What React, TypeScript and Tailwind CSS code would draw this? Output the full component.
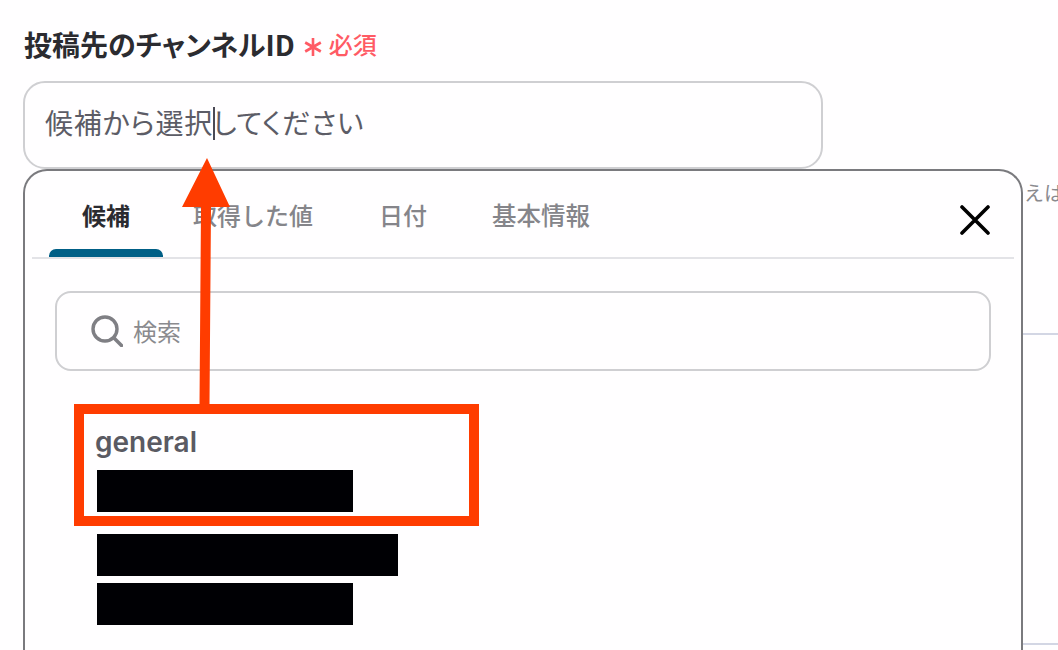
import React from "react";

const cjk = "font-['Noto_Sans_CJK_JP','Noto_Sans',sans-serif]";
const palt = "[font-feature-settings:'palt']";

const tabs = ["候補", "取得した値", "日付", "基本情報"];

const App = () => {
  return (
    <div className={`relative w-[1058px] h-[650px] overflow-hidden bg-[#fffeff] pl-[23px] pt-[26px] ${cjk}`}>
      <div className="flex items-center h-[36px] pl-[1px]">
        <span className={`text-[28px] leading-[36px] font-bold text-[#2b2b30] ${palt}`}>
          投稿先のチャンネルID
        </span>
        <svg width="20" height="20" viewBox="0 0 20 20" className="ml-[8px] mt-[5px]">
          <path d="M10 1v18M2.2 5.5l15.6 9M17.8 5.5l-15.6 9" stroke="#ff5a64" strokeWidth="2.6" />
        </svg>
        <span className="ml-[6px] text-[24px] leading-[36px] font-medium text-[#ff5a64]">必須</span>
      </div>

      <div className="mt-[19px] flex items-center w-[800px] h-[88px] rounded-[22px] border-2 border-[#cfcfd2] bg-[#fffeff] pl-[20px] pb-[7px]">
        <span className={`text-[28px] leading-[40px] tracking-[0.75px] text-[#5c5c66] whitespace-nowrap ${palt}`}>候補から選択してください</span>
      </div>

      <div className="flex items-start">
        <div className="shrink-0 w-[1000px] h-[520px] rounded-t-[24px] border-2 border-b-0 border-[#7a7a7e] bg-[#fffeff] px-[7px]">
          <div className="relative flex items-start h-[88px] border-b-2 border-[#e3e3e7]">
            <div className="flex flex-col items-center w-[114px] ml-[17px] h-[86px]">
              <span className="mt-[26px] text-[24px] leading-[36px] font-bold text-[#2b2b30]">{tabs[0]}</span>
              <div className="mt-auto w-full h-[8px] rounded-t-[7px] bg-[#005f86]" />
            </div>
            <span className="ml-[30px] mt-[26px] text-[24px] leading-[36px] font-medium text-[#85858a] whitespace-nowrap">{tabs[1]}</span>
            <span className="ml-[66px] mt-[26px] text-[24px] leading-[36px] font-medium text-[#85858a] whitespace-nowrap">{tabs[2]}</span>
            <span className="ml-[65px] mt-[26px] text-[24.5px] leading-[36px] font-medium text-[#85858a] whitespace-nowrap">{tabs[3]}</span>
            <svg width="30" height="30" viewBox="0 0 30 30" className="ml-auto mr-[24px] mt-[34px]">
              <path d="M2 2l26 26M28 2L2 28" stroke="#000" strokeWidth="3.6" strokeLinecap="round" />
            </svg>
          </div>

          <div className="mt-[32px] mx-[23px] flex items-center h-[80px] rounded-[16px] border-2 border-[#cfcfd2] pl-[34px]">
            <svg width="32" height="32" viewBox="0 0 32 32">
              <circle cx="14" cy="14" r="12" fill="none" stroke="#7f7f84" strokeWidth="3.4" />
              <path d="M23 23l7.5 7.5" stroke="#7f7f84" strokeWidth="3.6" strokeLinecap="round" />
            </svg>
            <span className="ml-[10px] text-[24px] leading-[36px] text-[#8a8a8e]">検索</span>
          </div>

          <div className="ml-[65px] mt-[53px] flex flex-col items-start">
            <span className="ml-[-2px] font-['Inter',sans-serif] text-[28px] leading-[36px] font-semibold text-[#5a5a62]">general</span>
            <div className="mt-[10px] w-[256px] h-[42px] bg-[#000004]" />
            <div className="mt-[22px] w-[301px] h-[42px] bg-[#000004]" />
            <div className="mt-[7px] w-[256px] h-[42px] bg-[#000004]" />
          </div>
        </div>

        <div className="flex-1 flex flex-col">
          <span className="ml-[1px] mt-[9px] text-[20px] leading-[30px] text-[#8a8a8e] whitespace-nowrap">えは</span>
          <div className="mt-[125px] h-[2px] bg-[#d3d6e4]" />
          <div className="mt-[308px] h-[2px] bg-[#d3d6e4]" />
        </div>
      </div>

      {/* red annotation: box and arrow on top of the screen capture */}
      <div className="absolute left-[74px] top-[404px] w-[405px] h-[122px] border-[10px] border-[#ff3c00]" />
      <svg width="60" height="250" viewBox="0 0 60 250" className="absolute left-[176px] top-[156px]">
        <path d="M31 2L54 51H35L33.5 250H23.5L25 51H6Z" fill="#ff3c00" />
      </svg>
      {/* text caret */}
      <div className="absolute left-[213px] top-[107px] w-[2px] h-[33px] bg-[#4a4a55]" />
    </div>
  );
};

export default App;
